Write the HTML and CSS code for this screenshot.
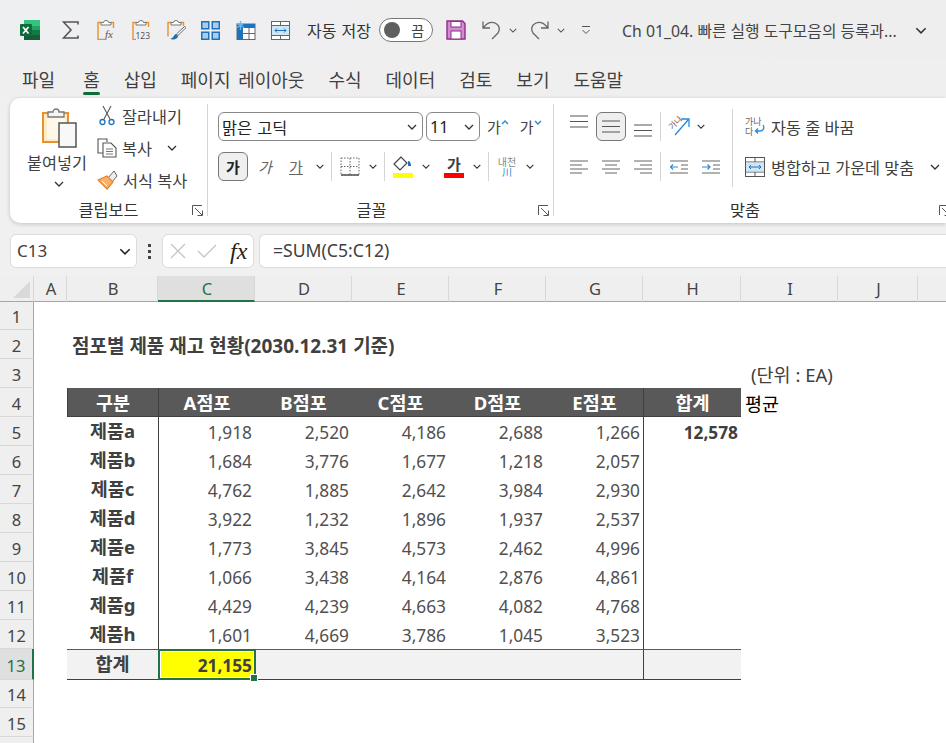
FILE: index.html
```html
<!DOCTYPE html>
<html lang="ko">
<head>
    <meta charset="UTF-8">
    <meta name="viewport" content="width=device-width, initial-scale=1.0">
    <title>Excel</title>
    <link rel="stylesheet" href="styles.css">
</head>
<body>
    <svg class="defs" width="0" height="0">
        <symbol id="chev" viewBox="0 0 10 6"><path d="M1 1l4 4 4-4" fill="none" stroke="currentColor" stroke-width="1.3"/></symbol>
        <symbol id="launch" viewBox="0 0 11 11"><path d="M.5 10V.5H10M3 3l7 7M10.5 5.5v5h-5" fill="none" stroke="#555" stroke-width="1"/></symbol>
    </svg>

    <header class="titlebar">
        <svg class="logo" width="20" height="20" viewBox="0 0 20 20">
            <rect x="4" y="0" width="16" height="20" rx="1" fill="#21a366"/>
            <rect x="4" y="0" width="16" height="6" fill="#33c481"/>
            <rect x="12" y="10" width="8" height="5" fill="#107c41"/>
            <rect x="4" y="10" width="8" height="10" fill="#185c37"/>
            <rect x="12" y="15" width="8" height="5" fill="#185c37"/>
            <rect x="0" y="4" width="12" height="12" rx="1" fill="#0f6b3b"/>
            <path d="M3 7l5.5 6.5M8.5 7L3 13.5" stroke="#fff" stroke-width="1.7"/>
        </svg>
        <svg class="qa sigma" width="17" height="18" viewBox="0 0 17 18"><path d="M16 3.5V1H1.5L9 9l-7.500 8H16v-2.500" fill="none" stroke="#555" stroke-width="1.6"/></svg>
        <svg class="qa paste-fx" width="19" height="20" viewBox="0 0 19 20">
            <path d="M5 2.5H1v17h7M13 2.5h3.500V8" fill="none" stroke="#e8912d" stroke-width="1.4"/>
            <path d="M4 5V2.500h2.500a2.500 2 0 0 1 5 0H14V5z" fill="#fff" stroke="#777"/>
            <text x="8" y="18" class="svg-fx">fx</text>
        </svg>
        <svg class="qa paste-num" width="19" height="20" viewBox="0 0 19 20">
            <path d="M5 2.5H1v17h3M13 2.5h3.500V7" fill="none" stroke="#e8912d" stroke-width="1.4"/>
            <path d="M4 5V2.500h2.500a2.500 2 0 0 1 5 0H14V5z" fill="#fff" stroke="#777"/>
            <text x="3.500" y="19" class="svg-num">123</text>
        </svg>
        <svg class="qa paste-brush" width="19" height="20" viewBox="0 0 19 20">
            <path d="M5 2.5H1v14M13 2.5h3.500V6" fill="none" stroke="#e8912d" stroke-width="1.4"/>
            <path d="M4 5V2.500h2.500a2.500 2 0 0 1 5 0H14V5z" fill="#fff" stroke="#777"/>
            <path d="M17.500 6.500l-8 7.500 1.500 1.500 8-8z" fill="#fff" stroke="#666"/>
            <path d="M9 14c-2 0-2 4-6 5 4 1 8 0 8-3z" fill="#1f6fb5"/>
        </svg>
        <svg class="qa grid-four" width="19" height="19" viewBox="0 0 19 19">
            <g fill="#a9cdec" stroke="#1c72bd" stroke-width="1.5">
                <rect x=".75" y=".75" width="7" height="7"/><rect x="11.25" y=".75" width="7" height="7"/>
                <rect x=".75" y="11.25" width="7" height="7"/><rect x="11.25" y="11.25" width="7" height="7"/>
            </g>
        </svg>
        <svg class="qa freeze" width="20" height="19" viewBox="0 0 20 19">
            <rect x="1" y="3" width="18" height="15.500" fill="#fff" stroke="#666"/>
            <rect x="1" y="3" width="18" height="4" fill="#1c72bd"/>
            <rect x="1" y="3" width="6" height="15.500" fill="#1c72bd"/>
            <path d="M7 12.500h12M13 7v11.500" stroke="#666"/>
            <path d="M4.500 0v9M1 2.500l7 4M8 2.500l-7 4" stroke="#6db8ee" stroke-width="1.3"/>
        </svg>
        <svg class="qa merge" width="19" height="19" viewBox="0 0 19 19">
            <rect x=".5" y=".5" width="18" height="18" fill="#fff" stroke="#666"/>
            <path d="M.5 4.500h18M.5 14.500h18M9.500.5v4M9.500 14.500v4" stroke="#666"/>
            <rect x="1" y="5" width="17" height="9" fill="#cfe6f7"/>
            <path d="M4 9.500h11M6 7.500l-2 2 2 2M13 7.500l2 2-2 2" fill="none" stroke="#1c72bd"/>
        </svg>
        <span class="autosave">자동 저장</span>
        <span class="toggle"><i class="toggle-knob"></i><b>끔</b></span>
        <svg class="qa save" width="20" height="20" viewBox="0 0 20 20">
            <path d="M1 1h15.500L19 3.500V19H1z" fill="#d58bd1" stroke="#8e2d8a" stroke-width="1.4"/>
            <rect x="5" y="1.500" width="10" height="5.500" fill="#fff" stroke="#8e2d8a"/>
            <rect x="5" y="11" width="10" height="8" fill="#fff" stroke="#8e2d8a"/>
        </svg>
        <svg class="qa undo" width="19" height="20" viewBox="0 0 19 20"><path d="M1 1.500v6.500h7M1.500 7.500C5 3 9 1.500 13 3c5 2 5 7 3 10l-6 6" fill="none" stroke="#666" stroke-width="1.3"/></svg>
        <svg class="qa-chev"><use href="#chev"/></svg>
        <svg class="qa redo" width="19" height="20" viewBox="0 0 19 20"><path d="M18 1.500v6.500h-7M17.500 7.500C14 3 10 1.500 6 3c-5 2-5 7-3 10l6 6" fill="none" stroke="#666" stroke-width="1.3"/></svg>
        <svg class="qa-chev"><use href="#chev"/></svg>
        <svg class="qa custom" width="10" height="9" viewBox="0 0 10 9"><path d="M1 .5h8M1.500 4L5 7.500 8.500 4" fill="none" stroke="#555"/></svg>
        <span class="doc-title">Ch 01_04. 빠른 실행 도구모음의 등록과...</span>
        <svg class="title-chev"><use href="#chev"/></svg>
    </header>

    <nav class="tabs">
        <span>파일</span>
        <span class="tab-active">홈</span>
        <span>삽입</span>
        <span>페이지 레이아웃</span>
        <span>수식</span>
        <span>데이터</span>
        <span>검토</span>
        <span>보기</span>
        <span>도움말</span>
    </nav>

    <section class="ribbon">
        <div class="group group-clip">
            <div class="group-body clip-body">
                <div class="paste">
                    <svg class="paste-icon" width="37" height="40" viewBox="0 0 37 40">
                        <path d="M1 5h25v29H1z" fill="#fdeccb" stroke="#e8912d" stroke-width="2"/>
                        <path d="M5 8h18v23H5z" fill="#fff" opacity=".6"/>
                        <path d="M6 9V4h5a3 3 0 0 1 6 0h5v5z" fill="#f4f4f4" stroke="#777" stroke-width="1.3"/>
                        <rect x="17" y="15" width="17" height="24" fill="#f8f8f8" stroke="#555" stroke-width="1.5"/>
                    </svg>
                    <span class="paste-label">붙여넣기</span>
                    <svg class="chev"><use href="#chev"/></svg>
                </div>
                <div class="clip-tools">
                    <div class="clip-tool">
                        <svg width="20" height="21" viewBox="0 0 20 21">
                            <path d="M6 1l7 13M14 1L7 14" stroke="#555" stroke-width="1.1" fill="none"/>
                            <circle cx="5.500" cy="17" r="2.500" fill="none" stroke="#1c72bd" stroke-width="1.3"/>
                            <circle cx="14.500" cy="17" r="2.500" fill="none" stroke="#1c72bd" stroke-width="1.3"/>
                        </svg>
                        <span>잘라내기</span>
                    </div>
                    <div class="clip-tool">
                        <svg width="20" height="20" viewBox="0 0 20 20">
                            <path d="M7 15H1V1h9v3" fill="none" stroke="#555" stroke-width="1.1"/>
                            <path d="M6 5h8l5 5v9H6z" fill="#fff" stroke="#555" stroke-width="1.1"/>
                            <path d="M9 11h7M9 13.500h7M9 16h7" stroke="#777"/>
                        </svg>
                        <span>복사</span>
                        <svg class="chev copy-chev"><use href="#chev"/></svg>
                    </div>
                    <div class="clip-tool">
                        <svg width="21" height="20" viewBox="0 0 21 20">
                            <path d="M11 8l4 4 5-6-3-5z" fill="#eee" stroke="#666"/>
                            <path d="M1 10l9-4 6 6-6 7z" fill="#f6b26b" stroke="#e8812d" stroke-width="1.2"/>
                            <path d="M5 11l5 5" stroke="#fff"/>
                        </svg>
                        <span>서식 복사</span>
                    </div>
                </div>
            </div>
            <div class="group-label">클립보드</div>
            <svg class="launcher"><use href="#launch"/></svg>
        </div>

        <div class="group group-font">
            <div class="group-body font-body">
                <div class="tool-row">
                    <div class="select select-font"><span>맑은 고딕</span><svg class="chev"><use href="#chev"/></svg></div>
                    <div class="select select-size"><span>11</span><svg class="chev"><use href="#chev"/></svg></div>
                    <span class="grow-btn">가<svg width="8" height="5" viewBox="0 0 8 5"><path d="M1 4l3-3 3 3" fill="none" stroke="#2b88d8" stroke-width="1.4"/></svg></span>
                    <span class="grow-btn shrink-btn">가<svg width="8" height="5" viewBox="0 0 8 5"><path d="M1 1l3 3 3-3" fill="none" stroke="#2b88d8" stroke-width="1.4"/></svg></span>
                </div>
                <div class="tool-row">
                    <span class="tool tool-on bold">가</span>
                    <span class="tool italic">가</span>
                    <span class="tool underline">가</span>
                    <svg class="chev chev-btn"><use href="#chev"/></svg>
                    <i class="sep"></i>
                    <span class="tool">
                        <svg width="20" height="19" viewBox="0 0 20 19"><path d="M1 1h18v17H1zM1 9.500h18M10 1v17" fill="none" stroke="#666" stroke-dasharray="1.5 1.5"/><path d="M1 18h18" stroke="#555" stroke-width="1.5"/></svg>
                    </span>
                    <svg class="chev chev-btn"><use href="#chev"/></svg>
                    <i class="sep"></i>
                    <span class="tool color-tool">
                        <svg width="20" height="15" viewBox="0 0 20 15"><path d="M8 1L1 8l6 6 7-7z" fill="#fff" stroke="#444" stroke-width="1.2"/><path d="M15 5c2 0 3 2 3 5h-3z" fill="#1c72bd"/></svg>
                        <i class="swatch swatch-yellow"></i>
                    </span>
                    <svg class="chev chev-btn"><use href="#chev"/></svg>
                    <span class="tool color-tool font-color">
                        <b>가</b>
                        <i class="swatch swatch-red"></i>
                    </span>
                    <svg class="chev chev-btn"><use href="#chev"/></svg>
                    <i class="sep"></i>
                    <span class="tool phonetic"><small>내천</small><em>川</em></span>
                    <svg class="chev chev-btn"><use href="#chev"/></svg>
                </div>
            </div>
            <div class="group-label">글꼴</div>
            <svg class="launcher"><use href="#launch"/></svg>
        </div>

        <div class="group group-align">
            <div class="group-body align-body">
                <div class="align-left">
                    <div class="tool-row">
                        <span class="tool"><svg class="valign-top" width="18" height="13" viewBox="0 0 18 13"><path d="M0 1h18M0 6.500h18M0 12h18" stroke="#555" stroke-width="1.2"/></svg></span>
                        <span class="tool tool-on"><svg width="18" height="13" viewBox="0 0 18 13"><path d="M0 1h18M0 6.500h18M0 12h18" stroke="#555" stroke-width="1.2"/></svg></span>
                        <span class="tool"><svg class="valign-bottom" width="18" height="13" viewBox="0 0 18 13"><path d="M0 1h18M0 6.500h18M0 12h18" stroke="#555" stroke-width="1.2"/></svg></span>
                        <i class="sep sep-tight"></i>
                        <span class="tool">
                            <svg class="orient-icon" width="22" height="22" viewBox="0 0 22 22"><path d="M7 19L20 4M13 3h8v8" fill="none" stroke="#2b88d8" stroke-width="1.3"/><text x="1" y="12" class="svg-angle" transform="rotate(-45 5 9)">가나</text></svg>
                        </span>
                        <svg class="chev chev-btn orient-chev"><use href="#chev"/></svg>
                    </div>
                    <div class="tool-row">
                        <span class="tool"><svg width="18" height="14" viewBox="0 0 18 14"><path d="M0 1h18M0 5h12M0 9h18M0 13h12" stroke="#666" stroke-width="1.2"/></svg></span>
                        <span class="tool"><svg width="18" height="14" viewBox="0 0 18 14"><path d="M0 1h18M3 5h12M0 9h18M3 13h12" stroke="#666" stroke-width="1.2"/></svg></span>
                        <span class="tool"><svg width="18" height="14" viewBox="0 0 18 14"><path d="M0 1h18M6 5h12M0 9h18M6 13h12" stroke="#666" stroke-width="1.2"/></svg></span>
                        <i class="sep sep-tight"></i>
                        <span class="tool"><svg width="18" height="14" viewBox="0 0 18 14"><path d="M0 1h18M11 5h7M11 9h7M0 13h18" stroke="#666" stroke-width="1.2"/><path d="M0 7h8M3 4.500L.5 7 3 9.500" fill="none" stroke="#2b88d8" stroke-width="1.2"/></svg></span>
                        <span class="tool"><svg width="18" height="14" viewBox="0 0 18 14"><path d="M0 1h18M11 5h7M11 9h7M0 13h18" stroke="#666" stroke-width="1.2"/><path d="M0 7h8M5.500 4.500L8 7 5.500 9.500" fill="none" stroke="#2b88d8" stroke-width="1.2"/></svg></span>
                    </div>
                </div>
                <i class="sep sep-tall"></i>
                <div class="align-right">
                    <div class="wide-tool">
                        <svg class="orient-icon" width="20" height="20" viewBox="0 0 20 20"><text x="0" y="8" class="svg-small">가나</text><text x="0" y="18" class="svg-small">다</text><path d="M18 8c2 3 0 6-3 6h-4M13 11.500L10.500 14l2.500 2.500" fill="none" stroke="#2b88d8" stroke-width="1.3"/></svg>
                        <span>자동 줄 바꿈</span>
                    </div>
                    <div class="wide-tool">
                        <svg width="20" height="20" viewBox="0 0 20 20"><rect x=".5" y=".5" width="19" height="19" fill="#fff" stroke="#555"/><path d="M.5 5h19M.5 15h19M10 .5V5M10 15v4.500" stroke="#555"/><rect x="1" y="5.500" width="18" height="9" fill="#cfe6f7"/><path d="M4 10h12M6 8l-2 2 2 2M14 8l2 2-2 2" fill="none" stroke="#1c72bd"/></svg>
                        <span>병합하고 가운데 맞춤</span>
                        <svg class="chev merge-chev"><use href="#chev"/></svg>
                    </div>
                </div>
            </div>
            <div class="group-label">맞춤</div>
            <svg class="launcher"><use href="#launch"/></svg>
        </div>
    </section>

    <div class="formula-row">
        <div class="name-box"><span>C13</span><svg class="chev"><use href="#chev"/></svg></div>
        <span class="dots"><i></i><i></i><i></i></span>
        <div class="fx-box">
            <svg width="16" height="16" viewBox="0 0 16 16"><path d="M1 1l14 14M15 1L1 15" stroke="#c4c4c4" stroke-width="1.3"/></svg>
            <svg width="20" height="14" viewBox="0 0 20 14"><path d="M1 7l6 6L19 1" fill="none" stroke="#c4c4c4" stroke-width="1.3"/></svg>
            <span class="fx">fx</span>
        </div>
        <div class="formula">=SUM(C5:C12)</div>
    </div>

    <div class="sheet-wrap">
    <table class="sheet">
        <colgroup>
            <col class="c-head"><col class="c-a"><col class="c-b">
            <col class="c-n"><col class="c-n"><col class="c-n"><col class="c-n"><col class="c-n"><col class="c-h"><col class="c-n">
            <col class="c-j"><col class="c-k">
        </colgroup>
        <thead>
            <tr>
                <th class="corner"><i></i></th>
                <th>A</th><th>B</th><th class="col-on">C</th><th>D</th><th>E</th><th>F</th><th>G</th><th>H</th><th>I</th><th>J</th><th></th>
            </tr>
        </thead>
        <tbody>
            <tr class="short"><th>1</th><td colspan="11"></td></tr>
            <tr><th>2</th><td></td><td colspan="10" class="sheet-title">점포별 제품 재고 현황(2030.12.31 기준)</td></tr>
            <tr><th>3</th><td colspan="8"></td><td colspan="3" class="unit">(단위 : EA)</td></tr>
            <tr>
                <th>4</th><td></td>
                <td class="dark edge">구분</td><td class="dark edge">A점포</td><td class="dark">B점포</td><td class="dark">C점포</td><td class="dark">D점포</td><td class="dark">E점포</td><td class="dark edge">합계</td>
                <td colspan="3" class="avg">평균</td>
            </tr>
            <tr><th>5</th><td></td><td class="item">제품a</td><td class="num edge">1,918</td><td class="num">2,520</td><td class="num">4,186</td><td class="num">2,688</td><td class="num">1,266</td><td class="num strong edge">12,578</td><td colspan="3"></td></tr>
            <tr><th>6</th><td></td><td class="item">제품b</td><td class="num edge">1,684</td><td class="num">3,776</td><td class="num">1,677</td><td class="num">1,218</td><td class="num">2,057</td><td class="edge"></td><td colspan="3"></td></tr>
            <tr><th>7</th><td></td><td class="item">제품c</td><td class="num edge">4,762</td><td class="num">1,885</td><td class="num">2,642</td><td class="num">3,984</td><td class="num">2,930</td><td class="edge"></td><td colspan="3"></td></tr>
            <tr><th>8</th><td></td><td class="item">제품d</td><td class="num edge">3,922</td><td class="num">1,232</td><td class="num">1,896</td><td class="num">1,937</td><td class="num">2,537</td><td class="edge"></td><td colspan="3"></td></tr>
            <tr><th>9</th><td></td><td class="item">제품e</td><td class="num edge">1,773</td><td class="num">3,845</td><td class="num">4,573</td><td class="num">2,462</td><td class="num">4,996</td><td class="edge"></td><td colspan="3"></td></tr>
            <tr><th>10</th><td></td><td class="item">제품f</td><td class="num edge">1,066</td><td class="num">3,438</td><td class="num">4,164</td><td class="num">2,876</td><td class="num">4,861</td><td class="edge"></td><td colspan="3"></td></tr>
            <tr><th>11</th><td></td><td class="item">제품g</td><td class="num edge">4,429</td><td class="num">4,239</td><td class="num">4,663</td><td class="num">4,082</td><td class="num">4,768</td><td class="edge"></td><td colspan="3"></td></tr>
            <tr><th>12</th><td></td><td class="item">제품h</td><td class="num edge">1,601</td><td class="num">4,669</td><td class="num">3,786</td><td class="num">1,045</td><td class="num">3,523</td><td class="edge"></td><td colspan="3"></td></tr>
            <tr class="tall">
                <th class="row-on">13</th><td></td>
                <td class="item total">합계</td><td class="num strong selected">21,155</td><td class="total"></td><td class="total"></td><td class="total"></td><td class="total"></td><td class="total edge"></td><td colspan="3"></td>
            </tr>
            <tr class="short"><th>14</th><td colspan="11"></td></tr>
            <tr><th>15</th><td colspan="11"></td></tr>
            <tr><th></th><td colspan="11"></td></tr>
        </tbody>
    </table>
    </div>
</body>
</html>
```

FILE: styles.css
```css
* {
    box-sizing: border-box;
}
html, body {
    height: 100%;
}
body {
    margin: 0;
    overflow: hidden;
    background: #f0f0f0;
    color: #404040;
    font-family: "Noto Sans", "Noto Sans CJK KR", sans-serif;
    font-size: 16.3px;
}
.defs {
    position: absolute;
}
svg {
    display: block;
    flex: none;
}
.svg-fx {
    font-family: "Liberation Serif", serif;
    font-size: 11px;
    font-style: italic;
    fill: #555;
}
.svg-num {
    font-size: 8.5px;
    fill: #555;
}
.svg-angle {
    font-size: 8px;
    fill: #555;
}
.svg-small {
    font-size: 9px;
    fill: #666;
}
.orient-icon {
    overflow: visible;
}

/* title bar */
.titlebar {
    display: flex;
    align-items: center;
    height: 60px;
    padding-left: 20px;
    background: linear-gradient(90deg, #eeeff1 0%, #efeeee 100%);
}
.sigma { margin-left: 22px; }
.paste-fx { margin-left: 18px; }
.paste-num { margin-left: 16px; }
.paste-brush { margin-left: 16px; }
.grid-four { margin-left: 15px; }
.freeze { margin-left: 16px; }
.merge { margin-left: 15px; }
.autosave {
    margin-left: 17px;
    font-size: 16px;
    word-spacing: 1px;
    color: #333;
}
.toggle {
    display: flex;
    align-items: center;
    justify-content: space-between;
    width: 54px;
    height: 24px;
    margin-left: 8px;
    padding: 0 8px 0 4px;
    border: 1px solid #777;
    border-radius: 12px;
    background: #fff;
}
.toggle-knob {
    width: 16px;
    height: 16px;
    border-radius: 50%;
    background: #5f5f5f;
}
.toggle b {
    font-size: 14px;
    font-weight: 400;
}
.save { margin-left: 13px; }
.undo { margin-left: 16px; }
.qa-chev {
    width: 8px;
    height: 5px;
    margin-left: 8px;
    color: #555;
}
.redo { margin-left: 13px; }
.custom { margin-left: 16px; margin-top: 1px; }
.doc-title {
    margin-left: 31px;
    width: 278px;
    font-size: 15.8px;
    white-space: nowrap;
    color: #444;
}
.title-chev {
    width: 12px;
    height: 7px;
    margin-left: 15px;
    color: #333;
}

/* tabs */
.tabs {
    display: flex;
    gap: 24px;
    height: 38px;
    padding-left: 22px;
    font-size: 18px;
    word-spacing: 3px;
    white-space: nowrap;
    background: #efefef;
}
.tabs span {
    position: relative;
    height: 33px;
    line-height: 40px;
}
.tabs .tab-active {
    margin-left: 4px;
}
.tabs .tab-active::after {
    content: "";
    position: absolute;
    left: 0;
    right: 0;
    bottom: -2px;
    height: 3px;
    border-radius: 2px;
    background: #0e6b3a;
}

/* ribbon */
.ribbon {
    display: flex;
    height: 125px;
    margin-left: 10px;
    padding-top: 6px;
    border-radius: 10px 0 0 10px;
    background: #fff;
    box-shadow: 0 1px 4px rgba(0, 0, 0, 0.2);
    overflow: hidden;
}
.group {
    position: relative;
    display: flex;
    flex-direction: column;
    height: 112px;
    border-right: 1px solid #d4d4d4;
}
.group-clip { width: 198px; }
.group-font { width: 346px; }
.group-align { flex: 1; border-right: 0; }
.group-body {
    flex: none;
    height: 94px;
}
.group-label {
    flex: none;
    line-height: 24px;
    text-align: center;
    color: #333;
}
.group-font .group-label { padding-right: 18px; }
.group-align .group-label { text-align: left; padding-left: 176px; }
.launcher {
    position: absolute;
    right: 4px;
    bottom: 0;
    width: 11px;
    height: 11px;
}
.group-align .launcher { right: -4px; }
.chev {
    width: 10px;
    height: 6px;
    color: #333;
}

.clip-body {
    display: flex;
}
.paste {
    display: flex;
    flex-direction: column;
    align-items: center;
    width: 64px;
    margin-left: 15px;
    padding-top: 4px;
}
.paste-icon { margin-left: 6px; }
.paste-label {
    margin-top: 4px;
    line-height: 22px;
    white-space: nowrap;
}
.paste .chev { margin-top: 7px; margin-left: 4px; }
.clip-tools {
    display: flex;
    flex-direction: column;
    gap: 11px;
    margin-left: 8px;
    padding-top: 1px;
}
.clip-tool {
    display: flex;
    align-items: center;
    gap: 5px;
    height: 21px;
    white-space: nowrap;
}
.copy-chev { margin-left: 10px; }

.tool-row {
    display: flex;
    align-items: center;
    height: 29px;
}
.font-body,
.align-left {
    padding: 8px 0 0 10px;
}
.font-body .tool-row + .tool-row,
.align-left .tool-row + .tool-row {
    margin-top: 11px;
}
.select {
    display: flex;
    align-items: center;
    justify-content: space-between;
    height: 29px;
    padding: 0 5px 0 3px;
    border: 1px solid #888;
    border-radius: 6px;
    color: #222;
    background: #fff;
}
.select-font {
    width: 205px;
    word-spacing: 1px;
}
.select-size {
    width: 54px;
    margin-left: 3px;
}
.grow-btn {
    display: flex;
    align-items: flex-start;
    margin-left: 7px;
    font-size: 15px;
    line-height: 20px;
}
.grow-btn svg { margin-top: 3px; }
.shrink-btn { margin-left: 11px; }
.tool {
    display: flex;
    align-items: center;
    justify-content: center;
    width: 30px;
    height: 29px;
    margin-right: 2px;
    font-size: 15px;
}
.tool-on {
    border: 1px solid #777;
    border-radius: 6px;
    background: #efefef;
}
.bold { font-weight: 700; color: #222; }
.italic { font-style: italic; color: #666; }
.underline { text-decoration: underline; color: #666; }
.chev-btn {
    width: 16px;
    height: 5px;
}
.font-body .tool { margin-right: 0; }
.font-body .bold { margin-right: 2px; }
.font-body .italic, .font-body .underline { margin-right: 1px; }
.sep {
    width: 1px;
    height: 29px;
    margin: 0 3px;
    background: #d4d4d4;
}
.color-tool {
    position: relative;
    flex-direction: column;
    gap: 2px;
}
.swatch {
    width: 20px;
    height: 5px;
}
.swatch-yellow { background: #ffff00; }
.swatch-red { background: #ff0000; }
.font-body .font-color {
    margin-left: 5px;
    gap: 0;
    line-height: 17px;
    font-size: 15px;
}
.phonetic {
    flex-direction: column;
    line-height: 10px;
    color: #888;
}
.phonetic small { font-size: 10px; }
.phonetic em { font-style: normal; font-size: 10px; color: #2b88d8; }

.align-body {
    display: flex;
}
.align-left { width: 178px; }
.sep-tight { margin: 0 3px 0 0; }
.orient-chev { margin-left: -3px; }
.valign-top { margin-bottom: 10px; }
.valign-bottom { margin-top: 8px; }
.sep-tall {
    height: 78px;
    margin: 5px 0 0;
}
.align-right {
    display: flex;
    flex-direction: column;
    gap: 19px;
    padding: 12px 0 0 12px;
}
.wide-tool {
    display: flex;
    align-items: center;
    gap: 6px;
    height: 21px;
    white-space: nowrap;
}
.merge-chev { margin-left: 10px; }

/* formula bar */
.formula-row {
    display: flex;
    align-items: center;
    height: 34px;
    margin: 11px 0 8px 10px;
}
.name-box,
.fx-box,
.formula {
    display: flex;
    align-items: center;
    height: 34px;
    border: 1px solid #dcdcdc;
    border-radius: 6px;
    background: #fff;
}
.name-box {
    justify-content: space-between;
    width: 127px;
    padding: 0 5px 2px 6px;
    font-size: 17px;
}
.name-box .chev {
    width: 12px;
    height: 7px;
    margin-top: 2px;
    color: #222;
}
.dots {
    display: flex;
    flex-direction: column;
    gap: 3px;
    width: 25px;
    align-items: center;
}
.dots i {
    width: 3px;
    height: 3px;
    background: #444;
}
.fx-box {
    width: 92px;
    padding-left: 7px;
    gap: 11px;
}
.fx {
    margin-left: 2px;
    font-family: "Liberation Serif", serif;
    font-size: 24px;
    font-style: italic;
    color: #222;
}
.formula {
    flex: 1;
    margin-left: 5px;
    padding: 0 0 2px 13px;
    border-right: 0;
    border-radius: 6px 0 0 6px;
    font-size: 17.6px;
}

/* sheet */
.sheet-wrap {
    overflow: hidden;
}
.sheet {
    table-layout: fixed;
    width: 998px;
    border-collapse: separate;
    border-spacing: 0;
    background: #fff;
}
.c-head { width: 34px; }
.c-a { width: 33px; }
.c-b { width: 91px; }
.c-n { width: 97px; }
.c-h { width: 98px; }
.c-j { width: 80px; }
.c-k { width: 80px; }
.sheet th {
    padding: 0;
    font-weight: 400;
    font-size: 16.5px;
    background: #efefef;
    color: #444;
}
.sheet thead th {
    height: 26px;
    padding-left: 2px;
    border-right: 1px solid #d8d8d8;
    border-bottom: 1px solid #a6a6a6;
}
.sheet thead .col-on {
    background: #dfdfdf;
    border-bottom: 2px solid #217346;
    color: #217346;
}
.sheet .corner {
    position: relative;
}
.corner i {
    position: absolute;
    right: 3px;
    bottom: 3px;
    border-style: solid;
    border-width: 0 0 17px 17px;
    border-color: transparent transparent #d9d9d9 transparent;
}
.sheet tbody th {
    height: 29px;
    padding-top: 2px;
    border-right: 1px solid #a6a6a6;
    border-bottom: 1px solid #d8d8d8;
}
.sheet tbody .row-on {
    background: #dfdfdf;
    border-right: 2px solid #217346;
    color: #217346;
}
.sheet td {
    height: 29px;
    padding: 0 3px;
    font-size: 17.3px;
    white-space: nowrap;
    color: #404040;
}
.sheet .short th,
.sheet .short td {
    height: 28px;
}
.sheet .tall th,
.sheet .tall td {
    height: 30px;
}
.sheet .sheet-title {
    padding-left: 5px;
    font-weight: 700;
    font-size: 19px;
}
.sheet .unit {
    padding-left: 10px;
    font-size: 18.5px;
}
.sheet .avg {
    padding-left: 4px;
    font-size: 18.5px;
    color: #000;
}
.sheet .dark {
    text-align: center;
    font-size: 18.5px;
    font-weight: 700;
    color: #fff;
    background: #595959;
    border-bottom: 1px solid #404040;
}
.edge {
    border-left: 1px solid #404040;
}
.sheet .item {
    padding-bottom: 3px;
    text-align: center;
    font-size: 18.5px;
    font-weight: 700;
}
.sheet .num {
    padding-top: 1px;
    text-align: right;
    color: #505050;
}
.sheet .strong {
    font-weight: 700;
    color: #404040;
}
.total {
    background: #f2f2f2;
    border-top: 1px solid #595959;
    border-bottom: 1px solid #404040;
}
.selected {
    position: relative;
    background: #ffff00;
    border-top: 1px solid #595959;
    border-bottom: 1px solid #404040;
    border-left: 1px solid #404040;
}
.selected::before {
    content: "";
    position: absolute;
    inset: -1px -1px -1px -1px;
    border: 2px solid #217346;
    box-shadow: inset 0 0 0 1px #fff;
}
.selected::after {
    content: "";
    position: absolute;
    right: -3px;
    bottom: -3px;
    width: 6px;
    height: 6px;
    border: 1px solid #fff;
    background: #217346;
}
```
